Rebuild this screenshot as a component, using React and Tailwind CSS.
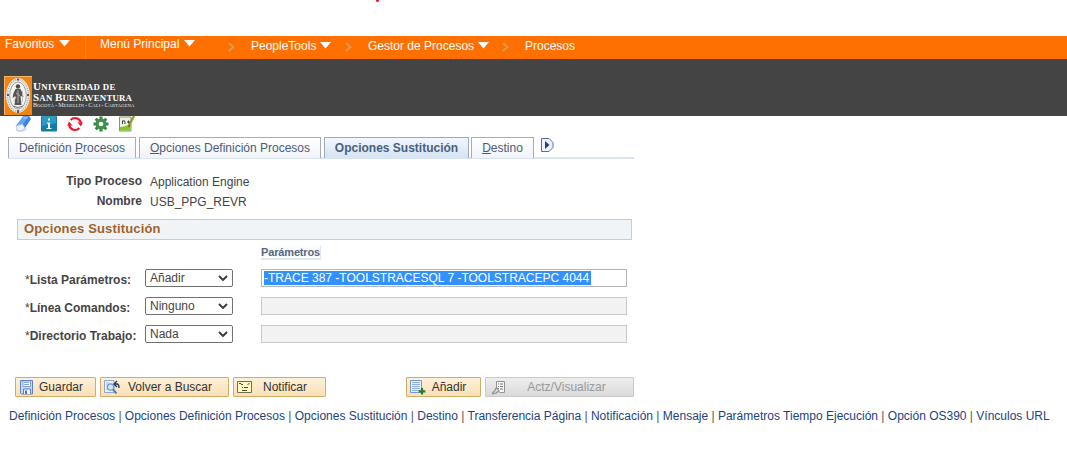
const sans = "font-['Liberation_Sans',Arial,sans-serif]";

function Caret({ className = "" }) {
  return (
    <svg className={`h-[7px] w-[11px] shrink-0 ${className}`} viewBox="0 0 11 7">
      <path d="M0 0h11L5.500 6.500z" fill="#fff" />
    </svg>
  );
}

function Crumb({ className = "" }) {
  return (
    <svg className={`h-[10px] w-[7px] shrink-0 ${className}`} viewBox="0 0 7 10">
      <path d="M1 1l4.500 4L1 9" fill="none" stroke="#d99a5c" strokeWidth="1.700" />
    </svg>
  );
}

function NavBar() {
  return (
    <nav className="flex h-[23px] bg-[#ff7000] text-[12px] leading-[14px] text-white">
      <div className="flex w-[86px] border-r border-[#f58a38] pt-px pl-[5px]">
        <span className="w-[54px]">Favoritos</span>
        <Caret className="mt-[3px]" />
      </div>
      <div className="flex w-[142px] pt-px pl-[14px]">
        <span className="w-[84px]">Menú Principal</span>
        <Caret className="mt-[3px]" />
      </div>
      <div className="flex pt-[3px]">
        <Crumb className="mt-[3px]" />
        <span className="ml-4 w-[69px]">PeopleTools</span>
        <Caret className="mt-[3px]" />
        <Crumb className="mt-[3px] ml-[14px]" />
        <span className="ml-[16px] w-[110px]">Gestor de Procesos</span>
        <Caret className="mt-[3px]" />
        <Crumb className="mt-[3px] ml-[13px]" />
        <span className="ml-[16px]">Procesos</span>
      </div>
    </nav>
  );
}

function Crest() {
  return (
    <svg className="h-[39px] w-[28px] shrink-0" viewBox="0 0 28 39">
      <rect width="28" height="39" fill="#ef8410" />
      <path d="M.500 39V.500H28" fill="none" stroke="#f9b469" />
      <ellipse cx="14" cy="19.500" rx="12" ry="17.500" fill="#e9e9e6" />
      <ellipse cx="14" cy="19.500" rx="10.500" ry="16" fill="none" stroke="#a5a7ac" strokeWidth="1.300" strokeDasharray="1 1.300" />
      <ellipse cx="14" cy="19.500" rx="8.300" ry="13.500" fill="#f4f4ef" stroke="#8e9092" strokeWidth=".800" />
      <circle cx="14" cy="10.500" r="2.200" fill="#4b4b4b" />
      <path d="M11.500 13h5l2 4 1 4-3-1 1 9h-7l1-9-3 2 1-5z" fill="#555" />
      <path d="M14 14v13M12 17l4 3M18.500 15v11M10 25l2-4" stroke="#b9b9b9" strokeWidth=".900" />
      <path d="M14 2.500v2M14 34v3M3 19h2M23 19h2" stroke="#333" strokeWidth="1.500" />
      <path d="M9 30q5 3 10 0" fill="none" stroke="#777" />
    </svg>
  );
}

function Banner() {
  return (
    <header className="flex h-[57px] bg-[#444] pt-[17px] pl-[4px] text-white">
      <Crest />
      <div className="pt-[5px] pl-px font-['Liberation_Serif',serif] font-bold whitespace-nowrap">
        <div className="h-[11px] text-[8.800px] leading-[11px] tracking-[0.320px]">
          <span className="text-[11px]">U</span>NIVERSIDAD DE
        </div>
        <div className="h-[10px] text-[8.800px] leading-[11px] tracking-[0.220px]">
          <span className="text-[11px]">S</span>AN <span className="text-[11px]">B</span>UENAVENTURA
        </div>
        <div className="h-[7px] text-[4.700px] leading-[7px] font-normal text-[#e8e8e8] tracking-[0.080px]">
          <span className="text-[6px]">B</span>OGOTÁ • <span className="text-[6px]">M</span>EDELLÍN •{" "}
          <span className="text-[6px]">C</span>ALI • <span className="text-[6px]">C</span>ARTAGENA
        </div>
      </div>
    </header>
  );
}

function Toolbar() {
  return (
    <div className="flex h-[21px] gap-[10px] pl-[15px]">
      <svg className="h-4 w-4" viewBox="0 0 16 16">
        <path d="M1 13q4-2 8-1l4 1-4 2.500q-5 1-8-1z" fill="#dcd9ef" />
        <path d="M8 .500L14 0l2 3-6 9-6 1-3-3z" fill="#3c82e8" />
        <path d="M8 .500L14 0 8 8l-6 2z" fill="#65a7f7" />
        <path d="M1 10l6.500-2 2.500 4-3 2.500-4.500.500z" fill="#f2f4ff" stroke="#a8b5ea" strokeWidth=".700" />
        <path d="M8.500 2.500l4-1" stroke="#a5cdff" />
      </svg>
      <svg className="h-4 w-4" viewBox="0 0 16 16">
        <rect width="16" height="15.500" rx="1" fill="#117da8" />
        <path d="M1 0h14v7L1 10z" fill="#2c9ac2" />
        <path d="M7 2.500h2v2H7zM6 6.500h3V12h1.500v1H5.500v-1H7V7.500H6z" fill="#fff" />
      </svg>
      <svg className="h-4 w-4" viewBox="0 0 16 16">
        <path d="M3.600 4A6 6 0 0 1 13.900 7M12.400 12A6 6 0 0 1 2.100 9" fill="none" stroke="#ed1730" strokeWidth="2.100" />
        <path d="M10.500 6.500h5.300L14 10.500zM5.500 9.500H.200L2 5.500z" fill="#ed1730" />
      </svg>
      <svg className="h-4 w-4" viewBox="0 0 16 16">
        <g stroke="#348440" strokeWidth="3">
          <path d="M8 .500v15M.500 8h15M2.700 2.700l10.600 10.600M13.300 2.700L2.700 13.300" />
        </g>
        <circle cx="8" cy="8" r="5.500" fill="#3e914a" />
        <circle cx="8" cy="8" r="2.300" fill="#fff" />
      </svg>
      <svg className="h-4 w-4" viewBox="0 0 16 16">
        <path d="M.500 1H12v14H.500z" fill="#eef4df" stroke="#87966e" />
        <path d="M1 11q6 0 10.500-4v7.500H1z" fill="#83c52b" />
        <path d="M3.500 8V4.500M4 5q2-1 2 1v2M8 6h3M9.500 4.500v3" fill="none" stroke="#39443c" />
        <path d="M15 0L9.500 11" stroke="#78781d" strokeWidth="2" />
        <path d="M15.500 0L11 9" stroke="#e1cc43" strokeWidth=".800" />
      </svg>
    </div>
  );
}

function Tab({ children, active, className }) {
  return (
    <div
      className={`h-[21px] border border-b-0 text-center leading-[21px] whitespace-nowrap ${
        active
          ? "border-[#9fa9b9] bg-linear-to-b from-[#f2f7fe] to-[#d5e3f4] font-bold text-[#4a5f7c]"
          : "border-[#a7adb7] bg-linear-to-b from-white to-[#f0f3f8] text-[#4c5c78]"
      } ${className}`}
    >
      {children}
    </div>
  );
}

function Tabs() {
  return (
    <div className="ml-[8px] flex h-[22px] w-[626px] border-b-2 border-[#dae3f0]">
      <Tab className="mr-[3px] w-[128px]">Definición <u>P</u>rocesos</Tab>
      <Tab className="mr-[3px] w-[182px]"><u>O</u>pciones Definición Procesos</Tab>
      <Tab active className="mr-[2px] w-[145px]">Opciones Sustitución</Tab>
      <Tab className="w-[63px]"><u>D</u>estino</Tab>
      <svg className="mt-px ml-[7px] h-[14px] w-[13px]" viewBox="0 0 13 14">
        <path d="M.500.500H8l4 4v5l-4 4H.500z" fill="#edf3fc" stroke="#5a6f9f" />
        <path d="M4 3l4.500 4L4 11z" fill="#203f87" />
      </svg>
    </div>
  );
}

function Select({ value }) {
  return (
    <div className="flex h-[18px] w-[88px] items-center justify-between rounded-[2px] border border-[#707070] bg-white pr-[4px] pl-1 leading-4">
      <span>{value}</span>
      <svg className="h-[6px] w-[10px]" viewBox="0 0 10 6">
        <path d="M1 1l4 4 4-4" fill="none" stroke="#3b3b3b" strokeWidth="1.900" />
      </svg>
    </div>
  );
}

function Row({ label, value, children }) {
  return (
    <div className="flex h-[28px] pl-[25px]">
      <div className="w-[120px] pt-[4px] leading-[14px] font-bold whitespace-nowrap">
        <span className="font-normal">*</span>{label}:
      </div>
      <Select value={value} />
      <div
        className={`ml-[28px] h-[18px] w-[366px] border pl-[2px] ${
          children ? "border-[#b0b5ba] bg-white pt-px" : "border-[#c9c9c9] bg-[#f2f2f2]"
        }`}
      >
        {children}
      </div>
    </div>
  );
}

function Button({ children, icon, disabled, className }) {
  return (
    <div
      className={`flex h-[20px] items-center rounded-[1px] border pr-[8px] pl-[3px] leading-[18px] ${
        disabled
          ? "border-[#c9c9c9] bg-linear-to-b from-[#eee] to-[#dadada] text-[#999]"
          : "border-[#d5ac63] bg-linear-to-b from-[#fdf0d8] to-[#fae0b5] text-[#333]"
      } ${className}`}
    >
      {icon}
      <span className="flex-1 text-center whitespace-nowrap">{children}</span>
    </div>
  );
}

const iconBox = "h-[15px] w-[16px] shrink-0";

const SaveIcon = (
  <svg className={iconBox} viewBox="0 0 16 15">
    <path d="M1.500.500h12v13.500h-11l-1-1z" fill="#c5d8f8" stroke="#5f80c4" />
    <path d="M4 1h7.500v5.500H4z" fill="#fff" stroke="#6d8dcc" strokeWidth=".800" />
    <path d="M5 2.500h5M5 4.500h5" stroke="#8eaadd" />
    <path d="M4.500 14V9h7v5" fill="#eef4ff" stroke="#5f80c4" />
    <path d="M6 10.500h2V14H6z" fill="#5474b8" />
  </svg>
);

const ReturnIcon = (
  <svg className={iconBox} viewBox="0 0 16 15">
    <path d="M.500.500H10v12H.500z" fill="#eef3fb" stroke="#91a7ce" />
    <path d="M2 3h3M2 5h2M2 9h2" stroke="#aabce0" />
    <circle cx="6.500" cy="7" r="3.200" fill="#cfe8f6" stroke="#6c97c8" strokeWidth="1.200" />
    <path d="M9 9.500l3.500 4" stroke="#5a7fb5" strokeWidth="2" />
    <path d="M10 4h3q2 0 2 4M13 1l-3 3 3 3" fill="none" stroke="#273a62" strokeWidth="1.400" />
  </svg>
);

const NotifyIcon = (
  <svg className={iconBox} viewBox="0 0 16 15">
    <path d="M.500 1.500h14v11H.500z" fill="#fff8c9" stroke="#746e4c" />
    <path d="M2 3.500h2M4 4.500h2M10.500 4.500l2-1M5 7.500h1M7 7.500h4M5 10.500h5" stroke="#504b35" />
  </svg>
);

const AddIcon = (
  <svg className={iconBox} viewBox="0 0 16 15">
    <path d="M.500.500h11v12H.500z" fill="#e9f1ff" stroke="#7897cf" />
    <path d="M2 2.500h8M2 4.500h8M2 6.500h8M2 8.500h8M2 10.500h8" stroke="#8fb0e6" />
    <path d="M12 8v6.500M8.700 11.300h6.600" stroke="#277d24" strokeWidth="2.200" />
  </svg>
);

const UpdateIcon = (
  <svg className={`${iconBox} ml-[3px]`} viewBox="0 0 16 15">
    <path d="M4.500 9V1.500h8v11h-5" fill="#f6f6f6" stroke="#929292" />
    <path d="M6 4h1M8 4h3M6 6.500h1M8 6.500h3M8 9h3" stroke="#777" />
    <path d="M0 14l4-5M3 8.500h4M5 8l2 3-3 2-4 1" fill="none" stroke="#8b8b8b" strokeWidth="1.200" />
  </svg>
);

const links = [
  "Definición Procesos",
  "Opciones Definición Procesos",
  "Opciones Sustitución",
  "Destino",
  "Transferencia Página",
  "Notificación",
  "Mensaje",
  "Parámetros Tiempo Ejecución",
  "Opción OS390",
  "Vínculos URL",
];

export default function App() {
  return (
    <div className={`h-[449px] w-[1067px] overflow-hidden bg-white text-[12px] text-[#444] ${sans}`}>
      <div className="h-[36px] pl-[376px]">
        <div className="h-[2px] w-[3px] rounded-b bg-[#e02030]" />
      </div>
      <NavBar />
      <Banner />
      <Toolbar />
      <Tabs />

      <dl className="grid h-[60px] grid-cols-[142px_auto] content-start gap-x-2 pt-[15px] leading-[14px]">
        <dt className="h-5 text-right font-bold">Tipo Proceso</dt>
        <dd className="pt-px">Application Engine</dd>
        <dt className="text-right font-bold">Nombre</dt>
        <dd className="pt-px">USB_PPG_REVR</dd>
      </dl>

      <h2 className="ml-[17px] h-[21px] w-[615px] border border-[#c5cdd2] bg-[#f0f4f6] pl-[6px] text-[13px] leading-[18px] font-bold tracking-[0.150px] text-[#a0622d]">
        Opciones Sustitución
      </h2>
      <div className="h-[29px] pt-[5px] pl-[261px]">
        <span className="block h-[15px] w-[60px] border-r border-b-2 border-[#e1e7ee] bg-[#fafcfd] text-[11px] leading-[14px] font-bold tracking-[-0.150px] text-[#56687f]">
          Parámetros
        </span>
      </div>

      <Row label="Lista Parámetros" value="Añadir">
        <span className="block h-[14px] w-[327px] bg-[#3390ff] leading-[14px] whitespace-nowrap text-white">
          -TRACE 387 -TOOLSTRACESQL 7 -TOOLSTRACEPC 4044
        </span>
      </Row>
      <Row label="Línea Comandos" value="Ninguno" />
      <Row label="Directorio Trabajo" value="Nada" />

      <div className="mt-[24px] flex pl-[15px]">
        <Button className="w-[81px]" icon={SaveIcon}>Guardar</Button>
        <Button className="ml-1 w-[129px]" icon={ReturnIcon}>Volver a Buscar</Button>
        <Button className="ml-1 w-[93px]" icon={NotifyIcon}>Notificar</Button>
        <Button className="ml-[80px] w-[75px]" icon={AddIcon}>Añadir</Button>
        <Button className="ml-1 w-[149px]" icon={UpdateIcon} disabled>Actz/Visualizar</Button>
      </div>

      <div className="mt-[12px] pl-[9px] leading-[14px] whitespace-nowrap text-[#1b4480]">
        {links.map((link, i) => (
          <span key={link}>
            {i > 0 && <span className="text-[#555]"> | </span>}
            {link}
          </span>
        ))}
      </div>
    </div>
  );
}
